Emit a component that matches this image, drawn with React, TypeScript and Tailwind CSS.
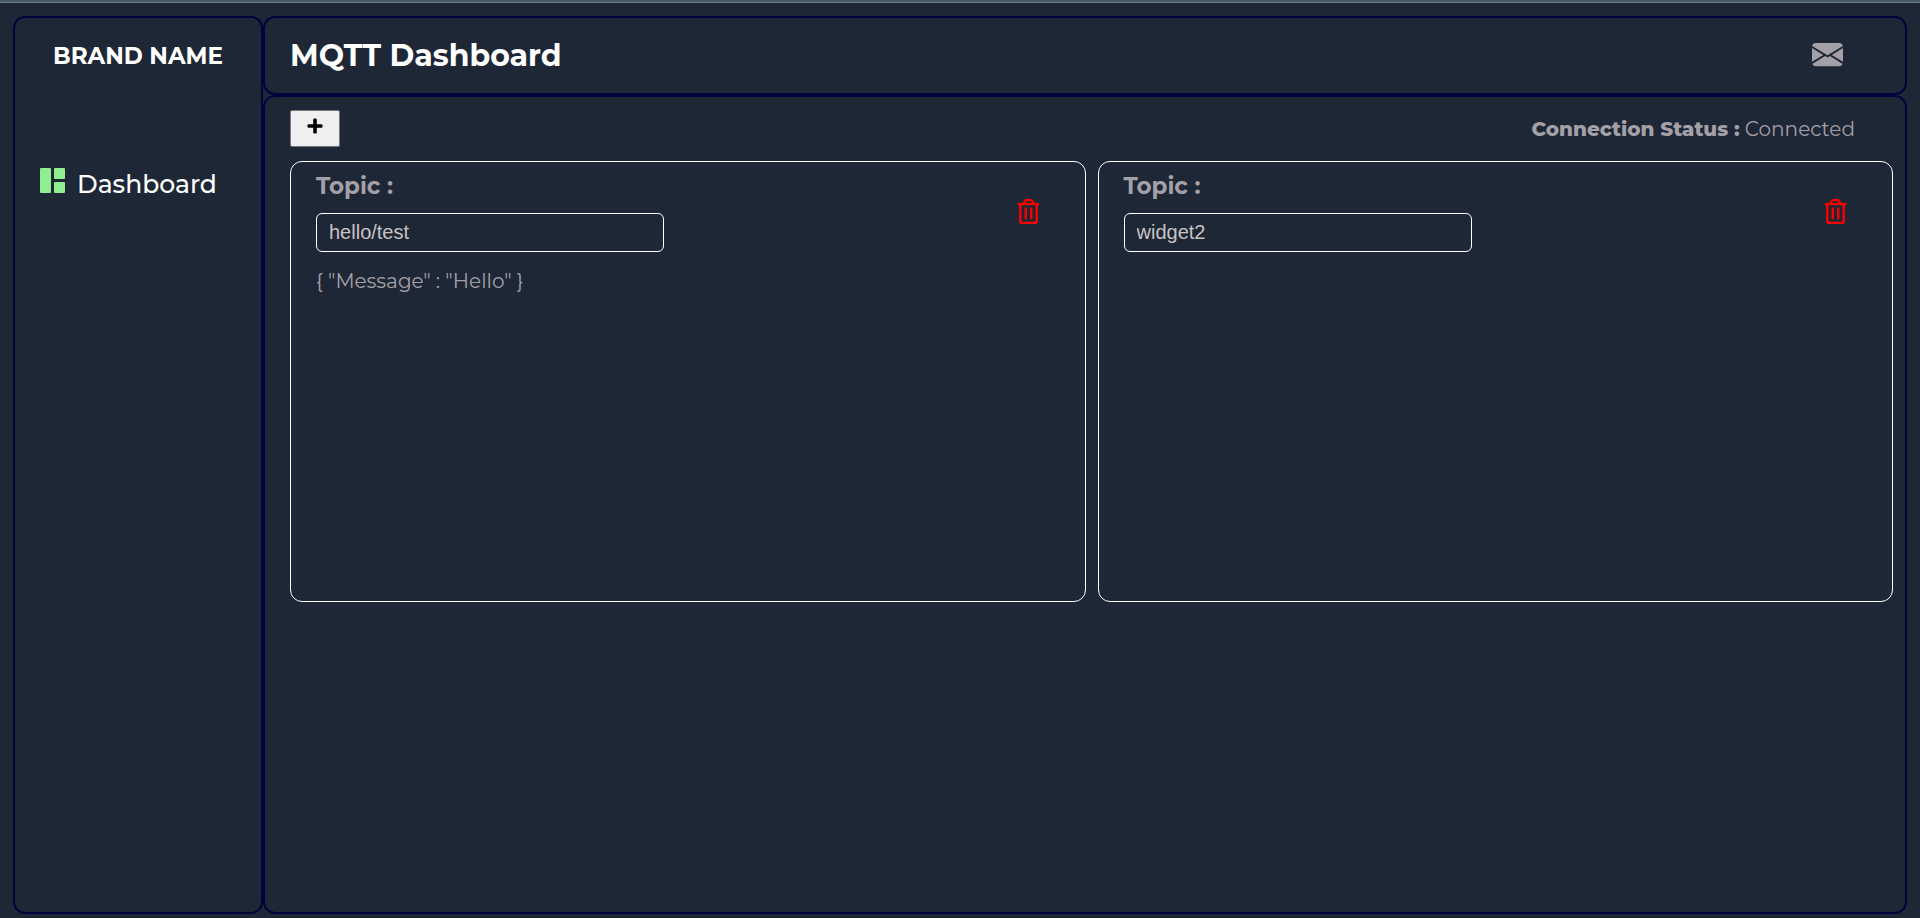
import React, { useState } from 'react';
import { BsEnvelopeFill } from 'react-icons/bs';
import { FaRegTrashAlt } from 'react-icons/fa';

type Widget = { id: number; topic: string; message: string };

const initialWidgets: Widget[] = [
  { id: 1, topic: 'hello/test', message: '{ "Message" : "Hello" }' },
  { id: 2, topic: 'widget2', message: '' },
];

function DashboardIcon() {
  return (
    <svg viewBox="0 0 25 25" className="size-[25px] fill-[#90ee90]" aria-hidden="true">
      <rect x="0" y="0" width="11" height="25" rx="1" />
      <rect x="14" y="0" width="11" height="11" rx="1" />
      <rect x="14" y="14" width="11" height="11" rx="1" />
    </svg>
  );
}

function PlusIcon() {
  return (
    <svg viewBox="0 0 16 16" className="size-4 fill-black" aria-hidden="true">
      <rect x="0.5" y="6.2" width="15" height="3.6" rx="1.2" />
      <rect x="6.2" y="0.5" width="3.6" height="15" rx="1.2" />
    </svg>
  );
}

function Sidebar() {
  return (
    <aside className="w-[250px] shrink-0 rounded-xl border-2 border-[#02023c] px-6 pt-[23px]">
      <p className="text-center text-[23px] leading-[30px] font-bold text-white">BRAND NAME</p>
      <nav className="mt-[97px]">
        <a href="#dashboard" className="flex items-start gap-3 pl-px text-white">
          <DashboardIcon />
          <span className="text-[25px] leading-8 font-medium">Dashboard</span>
        </a>
      </nav>
    </aside>
  );
}

type CardProps = {
  widget: Widget;
  onTopic: (topic: string) => void;
  onRemove: () => void;
};

function WidgetCard({ widget, onTopic, onRemove }: CardProps) {
  const inputId = `topic-${widget.id}`;
  return (
    <section className="flex h-[441px] items-start justify-between rounded-xl border border-white pt-2 pr-11 pl-[25px]">
      <div className="w-[348px]">
        <label htmlFor={inputId} className="block text-[23px] leading-8 font-bold">
          Topic :
        </label>
        <input
          id={inputId}
          value={widget.topic}
          onChange={(e) => onTopic(e.target.value)}
          className="mt-[11px] block h-[39px] w-full rounded-md border border-white bg-transparent px-3 font-['Liberation_Sans',Arial,sans-serif] text-[20px] text-[#c9c2c4] outline-none"
        />
        <p className="mt-[15px] text-[20px] leading-7">{widget.message}</p>
      </div>
      <button type="button" aria-label="Delete widget" onClick={onRemove} className="mt-[29px] text-[#ff0000]">
        <FaRegTrashAlt size={25} />
      </button>
    </section>
  );
}

export default function App() {
  const [widgets, setWidgets] = useState<Widget[]>(initialWidgets);

  const addWidget = () =>
    setWidgets((list) => [...list, { id: Math.max(0, ...list.map((w) => w.id)) + 1, topic: '', message: '' }]);
  const removeWidget = (id: number) => setWidgets((list) => list.filter((w) => w.id !== id));
  const setTopic = (id: number, topic: string) =>
    setWidgets((list) => list.map((w) => (w.id === id ? { ...w, topic } : w)));

  return (
    <div className="flex min-h-screen flex-col border-t border-[#4a5a69] bg-[#1e2735] font-['Montserrat',Inter,sans-serif] text-[#a3a0a8]">
      <div className="h-0.5 border-b border-[#6d7f85] bg-[#4a5a69]" />
      <div className="flex grow px-[13px] pt-[13px] pb-1">
        <Sidebar />
        <div className="flex min-w-0 grow flex-col">
          <header className="flex h-[79px] items-center justify-between rounded-xl border-2 border-[#02023c] pr-[62px] pl-[25px]">
            <h1 className="text-[30px] leading-10 font-bold text-white">MQTT Dashboard</h1>
            <button type="button" aria-label="Messages" className="pb-0.5">
              <BsEnvelopeFill size={31} />
            </button>
          </header>
          <main className="grow rounded-xl border-2 border-[#02023c] pt-[13px] pr-3 pl-[25px]">
            <div className="flex items-center justify-between pr-[38px]">
              <button
                type="button"
                aria-label="Add widget"
                onClick={addWidget}
                className="flex h-[37px] w-[50px] justify-center rounded-xs border border-[#767676] bg-[#efefef] pt-[7px] pr-px"
              >
                <PlusIcon />
              </button>
              <p className="text-[20px] leading-7">
                <span className="font-extrabold">Connection Status :</span> Connected
              </p>
            </div>
            <div className="mt-[14px] grid grid-cols-2 gap-3">
              {widgets.map((w) => (
                <WidgetCard
                  key={w.id}
                  widget={w}
                  onTopic={(topic) => setTopic(w.id, topic)}
                  onRemove={() => removeWidget(w.id)}
                />
              ))}
            </div>
          </main>
        </div>
      </div>
    </div>
  );
}
